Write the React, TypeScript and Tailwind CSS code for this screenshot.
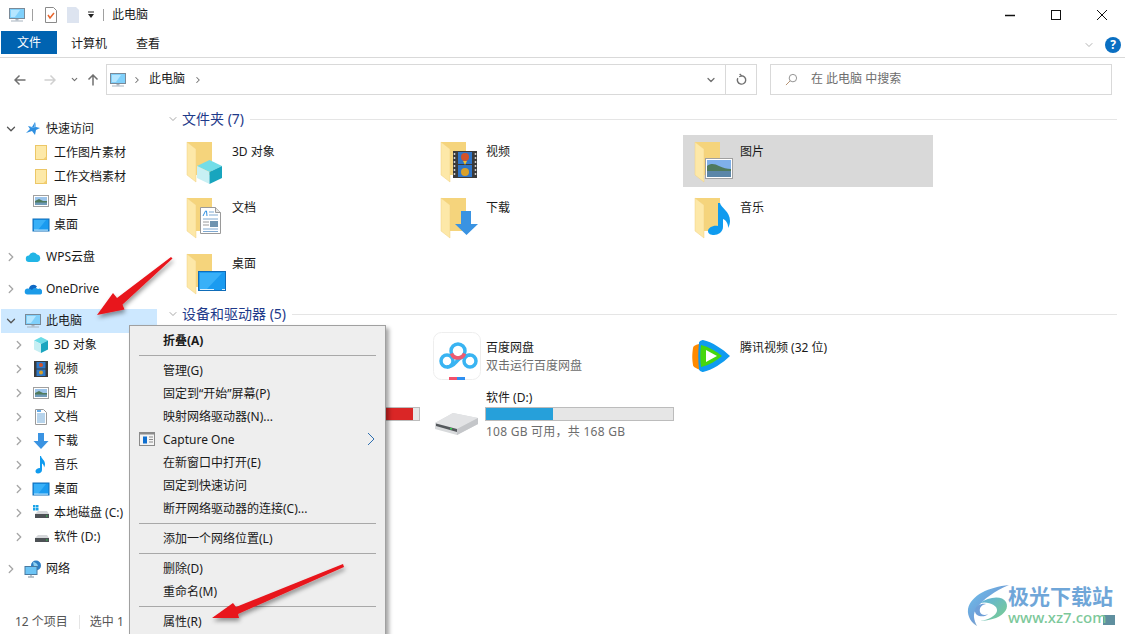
import type { ReactNode } from "react";
import { ChevronDown, ChevronRight } from "lucide-react";

type SmallIconName =
  | "star" | "folder" | "image" | "desktop" | "wps" | "onedrive" | "pc" | "cube"
  | "film" | "doc" | "download" | "music" | "cdrive" | "drive" | "net";

function SmallIcon({ name }: { name: SmallIconName }) {
  const parts: Record<SmallIconName, ReactNode> = {
    star: (
      <>
        <path d="M11 2l1 5 4 1-4 2-1 5-3-4-6 2 4-4-2-3 4 1z" fill="#2f8fe0" />
        <path d="M11 2l1 5-4 1-2-1 4 1z" fill="#8cc8f5" />
      </>
    ),
    folder: (
      <>
        <rect x="3.5" y="1.5" width="11" height="14" fill="#fde9a8" stroke="#ecc767" />
        <path d="M11 15.5h3.5V12z" fill="#f3cf72" />
      </>
    ),
    image: (
      <>
        <rect x="1.5" y="3.5" width="15" height="11" fill="#fff" stroke="#a0a0a0" />
        <rect x="3" y="5" width="12" height="4" fill="#9cc4ea" />
        <path d="M3 9l4-2 4 2h4v2H3z" fill="#4f7a5c" />
        <rect x="3" y="10.5" width="12" height="2.5" fill="#6f9ab8" />
      </>
    ),
    desktop: (
      <>
        <rect x="1" y="3" width="16" height="12" fill="#1a9bf0" stroke="#0f6cb8" />
        <path d="M2 4h12L6 14H2z" fill="#38b0f8" />
        <rect x="2" y="13.6" width="14" height="1" fill="#d8f0ff" />
      </>
    ),
    wps: (
      <path d="M5 14a3.200 3.200 0 0 1 0-6.400 4.500 4.500 0 0 1 8-1 3.800 3.800 0 0 1 .5 7.400z" fill="#21b5e6" />
    ),
    onedrive: (
      <>
        <path d="M5 9a4.500 4.500 0 0 1 8-2.500l-5 6H4z" fill="#0f68c4" />
        <path d="M3.500 14.500a3 3 0 0 1 .5-6c2 0 3 1 4 1.500a4 4 0 0 1 6-1 3 3 0 0 1 2.500 5.500z" fill="#1c9be8" />
      </>
    ),
    pc: (
      <>
        <rect x="1.500" y="2.500" width="15" height="10" fill="#7fd0fb" stroke="#7a8a98" />
        <path d="M3 4h9l-5 7H3z" fill="#b5e6ff" />
        <rect x="7.500" y="13" width="3" height="1.500" fill="#a8b4bf" />
        <rect x="3" y="14.500" width="12" height="1" fill="#a8b4bf" />
      </>
    ),
    cube: (
      <>
        <path d="M9 1l7 3.500-7 3.500-7-3.500z" fill="#6bdbe6" />
        <path d="M2 4.500l7 3.500v9l-7-3.500z" fill="#c6eff3" />
        <path d="M16 4.500l-7 3.500v9l7-3.500z" fill="#1ba5bf" />
      </>
    ),
    film: (
      <>
        <rect x="2" y="1" width="14" height="16" fill="#3b3b3b" />
        <rect x="4.500" y="2" width="9" height="6.500" fill="#2e79c9" />
        <rect x="4.500" y="9.500" width="9" height="6.500" fill="#2e79c9" />
        <circle cx="9" cy="5" r="2" fill="#d3532a" />
        <circle cx="9" cy="12.500" r="2" fill="#d9a02a" />
      </>
    ),
    doc: (
      <>
        <path d="M3.500 1.500h8l3 3v12h-11z" fill="#fff" stroke="#9a9a9a" />
        <path d="M5 6h8M5 8h8M5 10h8M5 12h8M5 14h8" stroke="#6fa8d8" />
        <path d="M5 3h4" stroke="#2f8fe0" strokeWidth="1.500" />
      </>
    ),
    download: <path d="M6 1h6v8h4.500L9 17 1.500 9H6z" fill="#3a93e2" />,
    music: (
      <path d="M9 0c.5 3 4 4 4 8 0 1.500-.5 2.500-1 3.500.2-2-1-3.500-2-4V14c0 2-2 3.500-4 3.500S3.500 16.500 3.500 15 5.500 12 8 12V0z" fill="#0f9bef" />
    ),
    cdrive: (
      <>
        <rect x="1" y="1" width="2.500" height="2.500" fill="#19a3e8" />
        <rect x="4" y="1" width="2.500" height="2.500" fill="#19a3e8" />
        <rect x="1" y="4" width="2.500" height="2.500" fill="#19a3e8" />
        <rect x="4" y="4" width="2.500" height="2.500" fill="#19a3e8" />
        <path d="M3 10l3-3h9l2 3z" fill="#d5d7da" />
        <rect x="3" y="10" width="14" height="4" fill="#4d5155" />
        <rect x="14" y="11.500" width="1.500" height="1" fill="#35d04f" />
      </>
    ),
    drive: (
      <>
        <path d="M3 10l3-3h9l2 3z" fill="#d5d7da" />
        <rect x="3" y="10" width="14" height="4" fill="#4d5155" />
        <rect x="14" y="11.500" width="1.500" height="1" fill="#35d04f" />
      </>
    ),
    net: (
      <>
        <circle cx="12" cy="5.500" r="5" fill="#2f7fc4" />
        <path d="M9 2c2 0 4 1 5 4l-4 1z" fill="#8fd0f0" />
        <rect x="1" y="6.500" width="12" height="8" fill="#6cc4f5" stroke="#4a7aa0" />
        <path d="M7 14.500v2M4 17h6" stroke="#7a8a98" />
      </>
    ),
  };
  return (
    <svg viewBox="0 0 18 18" className="w-[18px] h-[18px] shrink-0">
      {parts[name]}
    </svg>
  );
}

type OverlayName = "cube" | "film" | "image" | "doc" | "download" | "music" | "desktop";

function FolderIcon({ overlay }: { overlay: OverlayName }) {
  return (
    <svg viewBox="0 0 48 48" className="w-[48px] h-[48px] shrink-0">
      <path d="M8 5h25v33H8z" fill="#f5d47c" />
      <path d="M8 5l9 7v33l-9-7z" fill="#fde8a8" stroke="#f0d080" strokeWidth="0.500" />
      {overlay === "cube" && (
        <>
          <path d="M30.500 23L43 29l-12.500 6L18 29z" fill="#72dde8" />
          <path d="M18 29l12.500 6v12L18 41z" fill="#c8f0f4" />
          <path d="M43 29l-12.500 6v12L43 41z" fill="#18a5be" />
        </>
      )}
      {overlay === "film" && (
        <>
          <rect x="20" y="14" width="24" height="27" fill="#3a3a3a" />
          <rect x="25" y="15" width="14" height="12" fill="#2e75c9" />
          <rect x="25" y="28" width="14" height="12" fill="#2e75c9" />
          <circle cx="32" cy="20" r="4" fill="#d3532a" />
          <path d="M30 24h4l-2 4z" fill="#f0c030" />
          <circle cx="32" cy="35" r="4" fill="#d9a02a" />
          <path d="M21.500 16v24M42.500 16v24" stroke="#d0d0d0" strokeWidth="1.500" strokeDasharray="2 2" />
        </>
      )}
      {overlay === "image" && (
        <>
          <rect x="18.500" y="21.500" width="27" height="20" fill="#fff" stroke="#a0a0a0" />
          <rect x="20" y="23" width="24" height="9" fill="#7fb0ea" />
          <path d="M20 29c4-3 8-2 12 0 4 2 8 3 12 3v2H20z" fill="#4f7a5c" />
          <rect x="20" y="34" width="24" height="6" fill="#5b86a8" />
        </>
      )}
      {overlay === "doc" && (
        <>
          <path d="M21.500 14.500h15l5 5v21h-20z" fill="#fff" stroke="#9a9a9a" />
          <path d="M36.500 14.500v5h5" fill="#e4e4e4" stroke="#9a9a9a" />
          <path d="M24 23l2.500-5h1l.5 5" fill="none" stroke="#2f8fe0" />
          <path d="M30 19h5M30 22h9M24 26h15M24 36h15M24 38.500h15" stroke="#7fa8d0" />
          <rect x="31" y="28" width="8" height="6" fill="#6f94b0" />
          <path d="M24 29h6M24 32h6" stroke="#9a9a9a" />
        </>
      )}
      {overlay === "download" && <path d="M28 18h10v13h7L33.500 42 22 31h6z" fill="#3a93e2" />}
      {overlay === "music" && (
        <path d="M33 10c1 5 10 8 10 18 0 3-1 5-2 7 .5-4-2-8-5-9v8c0 5-5 8-9 8-3 0-6-1-6-4s5-6 10-5V10z" fill="#0f9bef" />
      )}
      {overlay === "desktop" && (
        <>
          <rect x="19.500" y="22.500" width="27" height="19" fill="#1a9bf0" stroke="#0f6cb8" />
          <path d="M21 24h22L28 40h-7z" fill="#38b0f8" />
          <path d="M21 40.500h25" stroke="#d8f0ff" strokeDasharray="14 8" />
        </>
      )}
    </svg>
  );
}

function BaiduIcon() {
  return (
    <svg viewBox="0 0 48 48" className="w-[48px] h-[48px] shrink-0 mt-[3px]">
      <rect x="0.500" y="0.500" width="47" height="47" rx="8" fill="#fff" stroke="#eeeeee" />
      <circle cx="14" cy="29" r="6" fill="none" stroke="#39b4f2" strokeWidth="3.500" />
      <circle cx="37" cy="29" r="6" fill="none" stroke="#39b4f2" strokeWidth="3.500" />
      <path d="M14 35c6 0 8-4 11-7 4-4 7-4 12-5" fill="none" stroke="#39b4f2" strokeWidth="3.500" />
      <circle cx="25" cy="19" r="7" fill="none" stroke="#39b4f2" strokeWidth="3.500" />
      <path d="M18.500 21.500a7 7 0 0 0 13 0" fill="none" stroke="#ef5a6f" strokeWidth="3.500" />
      <rect x="16" y="45" width="8" height="3" fill="#f2506b" />
      <rect x="24" y="45" width="8" height="3" fill="#2f8ff0" />
    </svg>
  );
}

function TencentIcon() {
  return (
    <svg viewBox="0 0 48 48" className="w-[48px] h-[48px] shrink-0 mt-[3px]">
      <path d="M12 12c-4 1-6 2-6 4-1 7-1 11 0 17 0 2 3 3 7 5z" fill="#ff8a00" />
      <path d="M16 8c-1 0-4 1-4 3-1 9-1 17 0 26 0 2 3 3 4 3 9-2 20-9 27-16-7-7-18-14-27-16z" fill="#0f9bf0" />
      <path d="M14 13c-1 7-1 15 0 22 8-2 15-6 21-11-6-5-13-9-21-11z" fill="#46d60f" />
      <path d="M19 18v12l11-6z" fill="#fff" />
    </svg>
  );
}

function DriveIcon({ windows }: { windows?: boolean }) {
  return (
    <svg viewBox="0 0 48 48" className="w-[48px] h-[48px] shrink-0 mt-[3px]">
      {windows && <rect x="4" y="10" width="10" height="10" fill="#19a3e8" />}
      <path d="M2 35l18-10 25 5v6L24 47 2 41z" fill="#d8dadc" />
      <path d="M2 35l22 6 21-11-25-5z" fill="#e2e3e5" />
      <path d="M3 35.500l21 5.500v3L3 38z" fill="#54585c" />
      <path d="M24 41l21-11v6L24 47z" fill="#c4c6c9" />
      <rect x="17" y="40" width="2" height="1.500" fill="#35d04f" />
    </svg>
  );
}

function TreeRow({ label, icon, level = 1, open, active }: {
  label: string;
  icon: SmallIconName;
  level?: 1 | 2;
  open?: boolean;
  active?: boolean;
}) {
  const chevron = open === undefined ? null : open ? (
    <ChevronDown className="w-[14px] h-[14px] -m-[1px] text-[#555555]" strokeWidth={2.25} />
  ) : (
    <ChevronRight className="w-[14px] h-[14px] -m-[1px] text-[#a6a6a6]" strokeWidth={2.25} />
  );
  return (
    <div className={`flex items-center gap-[7px] h-[24px] w-[156px] ml-[1px] ${level === 2 ? "pl-[12px]" : "pl-[4px]"} ${active ? "bg-[#cde8ff]" : ""}`}>
      <span className="w-[12px] h-[12px] shrink-0">{chevron}</span>
      <div className="flex items-center gap-[4px] whitespace-nowrap">
        <SmallIcon name={icon} />
        <span>{label}</span>
      </div>
    </div>
  );
}

function SectionHeader({ title }: { title: string }) {
  return (
    <div className="flex items-center h-[18px] pl-[7px] pr-[8px]">
      <ChevronDown className="w-[12px] h-[12px] text-[#8a8a8a]" strokeWidth={1.5} />
      <span className="ml-[3px] pb-[2px] text-[14px] text-[#1e3a8a] whitespace-nowrap">{title}</span>
      <div className="flex-1 h-[1px] bg-[#e5e5e5] ml-[6px]" />
    </div>
  );
}

function FolderCell({ label, overlay, selected }: { label: string; overlay: OverlayName; selected?: boolean }) {
  return (
    <div className={`flex gap-[5px] h-[52px] pl-[4px] pt-[2px] ${selected ? "bg-[#d9d9d9]" : ""}`}>
      <FolderIcon overlay={overlay} />
      <span className="mt-[7px] h-[16px] leading-[16px]">{label}</span>
    </div>
  );
}

function DriveBar({ percent, color }: { percent: number; color: string }) {
  return (
    <div className="h-[14px] w-[189px] -ml-[1px] bg-[#e6e6e6] border border-[#bcbcbc]">
      <div className="h-full" style={{ width: `${percent}%`, backgroundColor: color }} />
    </div>
  );
}

function Separator() {
  return <div className="h-[1px] bg-[#a8a8a8] mx-[9px] my-[3px]" />;
}

function MenuItem({ children, bold, icon, more }: { children: string; bold?: boolean; icon?: boolean; more?: boolean }) {
  return (
    <div className={`relative h-[23px] leading-[23px] pl-[33px] text-[#1a1a1a] whitespace-nowrap ${bold ? "font-bold" : ""}`}>
      {icon && (
        <svg viewBox="0 0 16 14" className="absolute left-[9px] top-[4px] w-[16px] h-[14px]">
          <rect x="0.500" y="0.500" width="15" height="13" fill="#f4f4f4" stroke="#8a8a8a" />
          <rect x="0.500" y="0.500" width="15" height="2" fill="#8a8a8a" />
          <rect x="4" y="4.500" width="4" height="7" fill="#0f6fd0" />
          <path d="M10 5h4M10 7.500h4M10 10h4" stroke="#8a8a8a" />
        </svg>
      )}
      {more && (
        <svg viewBox="0 0 8 14" className="absolute right-[10px] top-[4px] w-[8px] h-[14px]">
          <path d="M1 1l6 6-6 6" fill="none" stroke="#2f6fb0" strokeWidth="1" />
        </svg>
      )}
      {children}
    </div>
  );
}

function ContextMenu() {
  return (
    <div className="absolute left-[129px] top-[325px] w-[257px] h-[320px] bg-[#eeeeee] border border-[#a0a0a0] shadow-[3px_3px_4px_rgba(0,0,0,0.35)] text-[12px] pt-[3px]">
      <MenuItem bold>折叠(A)</MenuItem>
      <Separator />
      <MenuItem>管理(G)</MenuItem>
      <MenuItem>固定到“开始”屏幕(P)</MenuItem>
      <MenuItem>映射网络驱动器(N)...</MenuItem>
      <MenuItem icon more>Capture One</MenuItem>
      <MenuItem>在新窗口中打开(E)</MenuItem>
      <MenuItem>固定到快速访问</MenuItem>
      <MenuItem>断开网络驱动器的连接(C)...</MenuItem>
      <Separator />
      <MenuItem>添加一个网络位置(L)</MenuItem>
      <Separator />
      <MenuItem>删除(D)</MenuItem>
      <MenuItem>重命名(M)</MenuItem>
      <Separator />
      <MenuItem>属性(R)</MenuItem>
    </div>
  );
}

// red arrows and the site logo were painted onto the screenshot
function Annotations() {
  return (
    <svg viewBox="0 0 1125 634" className="absolute inset-0 w-[1125px] h-[634px] pointer-events-none">
      <defs>
        <filter id="arrow-shadow" x="-20%" y="-20%" width="150%" height="150%">
          <feDropShadow dx="1" dy="3" stdDeviation="2" floodColor="#000" floodOpacity="0.4" />
        </filter>
        <linearGradient id="swirl-a" x1="0" y1="0" x2="1" y2="1">
          <stop offset="0" stopColor="#6cc5ee" />
          <stop offset="0.500" stopColor="#6f9fd8" />
          <stop offset="1" stopColor="#e8e6a0" />
        </linearGradient>
        <linearGradient id="swirl-b" x1="0" y1="0" x2="1" y2="1">
          <stop offset="0" stopColor="#5fb0e0" />
          <stop offset="1" stopColor="#7ccf8c" />
        </linearGradient>
      </defs>
      <g filter="url(#arrow-shadow)" fill="#e8141c">
        <path d="M171 257l1.500 1.500-50 46 2 5-27.500 5.500 16-22 4 5z" />
        <path d="M343 564l1 3-106 47 1 4-27 0 21-15 3 4z" />
      </g>
      <path d="M1009 585c-20 2-38 10-41 24-1 8 4 14 9 17-3-6-5-12 0-18 6-9 18-17 32-23z" fill="url(#swirl-a)" />
      <path d="M980 603c8-6 22-8 26-1 3 6-1 12-10 16-6 2-12 3-16 3 8-1 16-5 17-10 1-6-9-10-17-8z" fill="url(#swirl-b)" />
      <path d="M975 610c1-4 6-7 11-6-5 1-7 4-6 8 1 3 5 4 8 2-3 4-14 3-13-4z" fill="#6f9fd8" />
      <rect x="1103" y="615" width="12" height="10" fill="#5f8f9f" />
    </svg>
  );
}

function Watermark() {
  return (
    <div className="absolute left-[1008px] top-[584px] whitespace-nowrap">
      <div className="text-[21px] leading-[24px] font-bold text-[#6fa6d8]">极光下载站</div>
      <div className="text-[15px] leading-[18px] font-medium text-[#7cc89a]">www.xz7.com</div>
    </div>
  );
}

export default function App() {
  return (
    <div className="relative w-[1125px] h-[634px] overflow-hidden bg-white flex flex-col text-[12px] text-[#1a1a1a] font-['Noto_Sans','Noto_Sans_CJK_SC',sans-serif]">
      {/* title bar */}
      <div className="flex items-center h-[30px] shrink-0 pl-[8px]">
        <SmallIcon name="pc" />
        <div className="w-[1px] h-[12px] bg-[#a0a0a0] ml-[6px] mr-[11px]" />
        <svg viewBox="0 0 14 18" className="w-[14px] h-[18px]">
          <path d="M1.500 1.500h8l3 3v12h-11z" fill="#fff" stroke="#8a8a8a" />
          <path d="M4 9l2 3 4-5" fill="none" stroke="#e8632a" strokeWidth="1.500" />
        </svg>
        <svg viewBox="0 0 14 18" className="w-[14px] h-[18px] ml-[8px]">
          <path d="M1 1h9l3 3v13H1z" fill="#dde4f0" />
        </svg>
        <svg viewBox="0 0 8 8" className="w-[8px] h-[8px] ml-[7px]">
          <path d="M1 1h6" stroke="#222" />
          <path d="M1 3h6L4 7z" fill="#222" />
        </svg>
        <div className="w-[1px] h-[12px] bg-[#a0a0a0] ml-[8px] mr-[8px]" />
        <span>此电脑</span>
        <div className="ml-auto flex items-center">
          <svg viewBox="0 0 46 30" className="w-[46px] h-[30px]">
            <path d="M18 15.500h10" stroke="#111" strokeWidth="1.500" />
          </svg>
          <svg viewBox="0 0 46 30" className="w-[46px] h-[30px]">
            <rect x="18.500" y="10.500" width="9" height="9" fill="none" stroke="#111" />
          </svg>
          <svg viewBox="0 0 46 30" className="w-[46px] h-[30px]">
            <path d="M18 10l10 10M28 10L18 20" stroke="#111" />
          </svg>
        </div>
      </div>

      {/* ribbon tabs */}
      <div className="flex items-start h-[28px] shrink-0 border-b border-[#d9d9d9] pt-[1px] pl-[1px]">
        <div className="w-[56px] h-[23px] leading-[23px] text-center bg-[#0063b1] text-white">文件</div>
        <span className="ml-[14px] leading-[25px]">计算机</span>
        <span className="ml-[29px] leading-[25px]">查看</span>
        <div className="ml-auto flex items-center h-[25px] pr-[4px]">
          <ChevronDown className="w-[12px] h-[12px] text-[#9a9a9a] mr-[10px] mt-[2px]" strokeWidth={1.5} />
          <div className="w-[16px] h-[16px] rounded-full bg-[#0a6fc2] text-white text-[12px] leading-[16px] text-center font-bold mt-[2px]">?</div>
        </div>
      </div>

      {/* address row */}
      <div className="flex items-center h-[39px] shrink-0 pt-[4px] pl-[14px]">
        <svg viewBox="0 0 12 12" className="w-[12px] h-[12px]">
          <path d="M11.500 6H1M5.500 1.500L1 6l4.500 4.500" fill="none" stroke="#707070" strokeWidth="1.500" />
        </svg>
        <svg viewBox="0 0 12 12" className="w-[12px] h-[12px] ml-[18px]">
          <path d="M.500 6H11M6.500 1.500L11 6l-4.500 4.500" fill="none" stroke="#d0d0d0" strokeWidth="1.500" />
        </svg>
        <ChevronDown className="w-[9px] h-[9px] ml-[14px] text-[#707070]" strokeWidth={3} />
        <svg viewBox="0 0 12 12" className="w-[12px] h-[12px] ml-[8px]">
          <path d="M6 11.500V1M1.500 5.500L6 1l4.500 4.500" fill="none" stroke="#707070" strokeWidth="1.500" />
        </svg>
        <div className="flex items-center w-[651px] h-[31px] ml-[7px] border border-[#d9d9d9]">
          <div className="ml-[2px]"><SmallIcon name="pc" /></div>
          <ChevronRight className="w-[10px] h-[10px] ml-[5px] text-[#707070]" strokeWidth={2.5} />
          <span className="ml-[7px] pb-[2px]">此电脑</span>
          <ChevronRight className="w-[10px] h-[10px] ml-[8px] text-[#707070]" strokeWidth={2.5} />
          <ChevronDown className="w-[12px] h-[12px] ml-auto mr-[8px] text-[#707070]" strokeWidth={2.5} />
          <div className="flex items-center justify-center w-[31px] h-full border-l border-[#d9d9d9]">
            <svg viewBox="0 0 14 14" className="w-[13px] h-[13px]">
              <path d="M7 3a4.500 4.500 0 1 1-4 2.500M7 3L5 1M7 3L4.500 4" fill="none" stroke="#707070" strokeWidth="1.500" />
            </svg>
          </div>
        </div>
        <div className="flex items-center w-[342px] h-[31px] ml-[13px] border border-[#d9d9d9] text-[#6d6d6d]">
          <svg viewBox="0 0 14 14" className="w-[13px] h-[13px] ml-[14px]">
            <circle cx="8.500" cy="5.500" r="4" fill="none" stroke="#8a8a8a" />
            <path d="M5.500 8.500L1 13" stroke="#b08a6a" />
          </svg>
          <span className="ml-[13px] pb-[2px]">在 此电脑 中搜索</span>
        </div>
      </div>

      {/* body */}
      <div className="flex flex-1 min-h-0">
        <aside className="w-[160px] shrink-0 pt-[20px] flex flex-col gap-[8px]">
          <div>
            <TreeRow label="快速访问" icon="star" open />
            <TreeRow label="工作图片素材" icon="folder" level={2} />
            <TreeRow label="工作文档素材" icon="folder" level={2} />
            <TreeRow label="图片" icon="image" level={2} />
            <TreeRow label="桌面" icon="desktop" level={2} />
          </div>
          <TreeRow label="WPS云盘" icon="wps" open={false} />
          <TreeRow label="OneDrive" icon="onedrive" open={false} />
          <div>
            <TreeRow label="此电脑" icon="pc" open active />
            <TreeRow label="3D 对象" icon="cube" level={2} open={false} />
            <TreeRow label="视频" icon="film" level={2} open={false} />
            <TreeRow label="图片" icon="image" level={2} open={false} />
            <TreeRow label="文档" icon="doc" level={2} open={false} />
            <TreeRow label="下载" icon="download" level={2} open={false} />
            <TreeRow label="音乐" icon="music" level={2} open={false} />
            <TreeRow label="桌面" icon="desktop" level={2} open={false} />
            <TreeRow label="本地磁盘 (C:)" icon="cdrive" level={2} open={false} />
            <TreeRow label="软件 (D:)" icon="drive" level={2} open={false} />
          </div>
          <TreeRow label="网络" icon="net" open={false} />
        </aside>

        <main className="flex-1 pt-[13px]">
          <SectionHeader title="文件夹 (7)" />
          <div className="grid grid-cols-[250px_250px_250px] gap-[4px] ml-[15px] mt-[7px]">
            <FolderCell label="3D 对象" overlay="cube" />
            <FolderCell label="视频" overlay="film" />
            <FolderCell label="图片" overlay="image" selected />
            <FolderCell label="文档" overlay="doc" />
            <FolderCell label="下载" overlay="download" />
            <FolderCell label="音乐" overlay="music" />
            <FolderCell label="桌面" overlay="desktop" />
          </div>
          <div className="mt-[6px]">
            <SectionHeader title="设备和驱动器 (5)" />
          </div>
          <div className="grid grid-cols-[250px_250px_250px] gap-x-[4px] ml-[15px] mt-[6px]">
            <div className="h-[56px]" />
            <div className="flex gap-[5px] h-[56px] pl-[4px]">
              <BaiduIcon />
              <div className="pt-[11px]">
                <div className="h-[16px] leading-[16px]">百度网盘</div>
                <div className="h-[16px] leading-[16px] mt-[2px] text-[#6d6d6d]">双击运行百度网盘</div>
              </div>
            </div>
            <div className="flex gap-[5px] h-[56px] pl-[4px]">
              <TencentIcon />
              <div className="pt-[11px] h-[16px] leading-[16px] whitespace-nowrap">腾讯视频 (32 位)</div>
            </div>
            {/* C: drive, its labels sit behind the context menu */}
            <div className="flex gap-[5px] h-[56px] pl-[4px]">
              <DriveIcon windows />
              <div className="pt-[22px]">
                <DriveBar percent={97} color="#da2626" />
              </div>
            </div>
            <div className="flex gap-[5px] h-[56px] pl-[4px]">
              <DriveIcon />
              <div>
                <div className="h-[16px] leading-[16px] mt-[5px]">软件 (D:)</div>
                <div className="mt-[1px]">
                  <DriveBar percent={36} color="#26a0da" />
                </div>
                <div className="h-[16px] leading-[16px] mt-[3px] text-[#6d6d6d] tracking-[0.25px] whitespace-nowrap">108 GB 可用，共 168 GB</div>
              </div>
            </div>
          </div>
        </main>
      </div>

      <div className="absolute left-[15px] top-[614px] flex items-center h-[16px] text-[#555555] whitespace-nowrap">
        <span>12 个项目</span>
        <div className="w-[1px] h-[14px] bg-[#e5e5e5] ml-[11px] mr-[10px]" />
        <span>选中 1</span>
      </div>

      <ContextMenu />
      <Annotations />
      <Watermark />
    </div>
  );
}
